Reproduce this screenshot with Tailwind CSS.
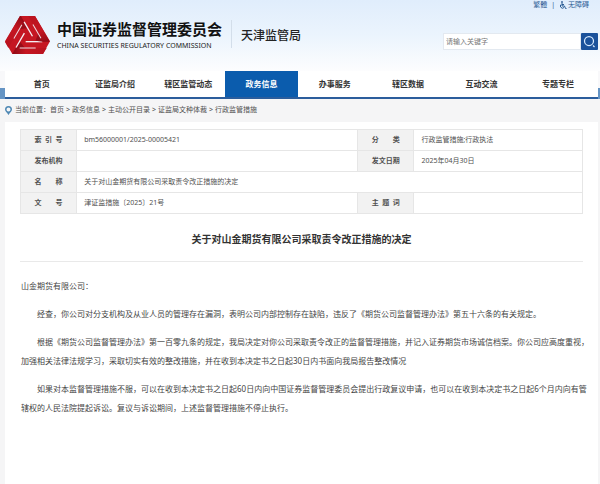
<!DOCTYPE html>
<html lang="zh-CN">
<head>
    <meta charset="UTF-8">
    <meta name="viewport" content="width=device-width, initial-scale=1.0">
    <title>关于对山金期货有限公司采取责令改正措施的决定</title>
    <script src="https://cdn.jsdelivr.net/npm/@tailwindcss/browser@4"></script>
</head>
<body class="min-h-screen flex flex-col bg-[#f5f5f6] text-[#505050] text-[7px] font-['Noto_Sans','Noto_Sans_CJK_SC',sans-serif]">

    <!-- Header -->
    <header class="bg-linear-to-b from-[#e0edfc] via-[#ebf4fd] to-[#fdfdfe]">
        <div class="flex justify-between h-[71px] pl-[5px] pr-[2px]">
            <div class="flex items-start pt-[16px]">
                <svg class="w-[45px] h-[38px]" viewBox="0 0 135 114" aria-hidden="true">
                    <defs>
                        <linearGradient id="ribbon" x1="0" x2="1">
                            <stop offset="0" stop-color="#8c0a16"/>
                            <stop offset="0.4" stop-color="#c51622"/>
                            <stop offset="1" stop-color="#b8121e"/>
                        </linearGradient>
                        <g id="arm">
                            <path fill="url(#ribbon)" d="M22 114H114L125 96H33Z"/>
                            <path fill="#980d19" d="M22 114L33 95L46 78L60 96H38Z"/>
                            <path fill="none" stroke="#f4eff4" stroke-width="4" d="M62 77H112"/>
                            <path fill="none" stroke="#eedde3" stroke-width="3" d="M44 96H92"/>
                        </g>
                    </defs>
                    <path fill="#c51622" d="M45 0H90L135 76L114 114H22L0 76Z"/>
                    <use href="#arm"/>
                    <use href="#arm" transform="rotate(120 67.5 63)"/>
                    <use href="#arm" transform="rotate(240 67.5 63)"/>
                </svg>
                <div class="ml-[7px] pr-[9px] flex flex-col">
                    <strong class="text-[15px] leading-[26px] text-[#111]">中国证券监督管理委员会</strong>
                    <span class="text-[7px] leading-[8px] text-[#222]">CHINA SECURITIES REGULATORY COMMISSION</span>
                </div>
                <span class="border-l border-[#d3deea] mt-1 h-[28px] pl-[9px] pt-[4px] text-[12px] leading-[24px] font-medium text-[#222]">天津监管局</span>
            </div>
            <div class="flex flex-col items-end">
                <div class="flex items-center h-[10px] mr-[9px] text-[#2b5c94]">
                    <a href="#">繁體</a>
                    <span class="mx-[4px]">|</span>
                    <a href="#" class="flex items-center gap-px">
                        <svg class="w-[8px] h-[8px]" viewBox="0 0 16 16" fill="none" stroke="currentColor" stroke-width="2" aria-hidden="true">
                            <circle cx="6" cy="2" r="1" fill="currentColor"/>
                            <path d="M6 4V10H11L13 15H15M6 7H10M4 7A4 4 0 1 0 10 13"/>
                        </svg>
                        无障碍
                    </a>
                </div>
                <form class="flex mt-[23px]">
                    <input type="text" aria-label="搜索" placeholder="请输入关键字" class="w-[138px] h-[17px] px-[2px] bg-white border border-[#e3e9f0] placeholder:text-[#777]">
                    <button type="button" aria-label="搜索" class="w-[17px] h-[17px] flex items-center justify-center rounded-[1px] bg-[#1b529b]">
                        <svg class="w-[13px] h-[13px]" viewBox="0 0 26 26" fill="none" stroke="#d9ecff" stroke-width="2.5" aria-hidden="true">
                            <circle cx="12" cy="12" r="9"/>
                            <path d="M20 21L23 24"/>
                        </svg>
                    </button>
                </form>
            </div>
        </div>
    </header>

    <!-- Main navigation -->
    <div class="pl-[5px] pr-[2px] bg-linear-to-b from-[#f8f8fa] from-60% to-[#6594c4] to-60%">
        <nav class="grid grid-cols-[repeat(7,11fr)_12fr] h-[28px] bg-white border-b-2 border-[#2b5d9c] text-[8px] leading-[26px] font-bold text-center text-[#333]">
            <a href="#">首页</a>
            <a href="#">证监局介绍</a>
            <a href="#">辖区监管动态</a>
            <a href="#" class="bg-[#0b5cad] text-white">政务信息</a>
            <a href="#">办事服务</a>
            <a href="#">辖区数据</a>
            <a href="#">互动交流</a>
            <a href="#">专题专栏</a>
        </nav>
    </div>

    <!-- Breadcrumb -->
    <div class="flex items-center h-[23px] pl-[5px]">
        <svg class="w-[7px] h-[9px] mr-[3px]" viewBox="0 0 14 18" aria-hidden="true">
            <path fill="#4f88b4" fill-rule="evenodd" d="M7 0A7 7 0 0 0 0 7C0 11 4 13 7 18C10 13 14 11 14 7A7 7 0 0 0 7 0ZM7 3A4 4 0 1 1 7 11A4 4 0 0 1 7 3Z"/>
        </svg>
        <span>当前位置：</span>
        <a href="#">首页</a><span class="mx-[2px]">&gt;</span>
        <a href="#">政务信息</a><span class="mx-[2px]">&gt;</span>
        <a href="#">主动公开目录</a><span class="mx-[2px]">&gt;</span>
        <a href="#">证监局文种体裁</a><span class="mx-[2px]">&gt;</span>
        <a href="#">行政监管措施</a>
    </div>

    <!-- Document -->
    <main class="grow ml-[5px] mr-[2px] pt-[7px] bg-white">
        <div class="px-[15px]">
            <table class="w-full table-fixed border-collapse leading-[20px] [&_td]:border [&_th]:border [&_td]:border-[#e6e6e6] [&_th]:border-[#e6e6e6] [&_td]:h-[21px] [&_td]:px-[7px] [&_td]:py-0 [&_th]:p-0 [&_th]:bg-[#f2f2f2]">
                <colgroup>
                    <col class="w-[10%]"><col class="w-[50%]"><col class="w-[10%]"><col class="w-[30%]">
                </colgroup>
                <tr>
                    <th scope="row"><div class="w-[28px] mx-auto [text-align-last:justify]">索 引 号</div></th>
                    <td>bm56000001/2025-00005421</td>
                    <th scope="row"><div class="w-[28px] mx-auto [text-align-last:justify]">分 类</div></th>
                    <td>行政监管措施;行政执法</td>
                </tr>
                <tr>
                    <th scope="row"><div class="w-[28px] mx-auto">发布机构</div></th>
                    <td></td>
                    <th scope="row"><div class="w-[28px] mx-auto">发文日期</div></th>
                    <td>2025年04月30日</td>
                </tr>
                <tr>
                    <th scope="row"><div class="w-[28px] mx-auto [text-align-last:justify]">名 称</div></th>
                    <td colspan="3">关于对山金期货有限公司采取责令改正措施的决定</td>
                </tr>
                <tr>
                    <th scope="row"><div class="w-[28px] mx-auto [text-align-last:justify]">文 号</div></th>
                    <td>津证监措施〔2025〕21号</td>
                    <th scope="row"><div class="w-[28px] mx-auto [text-align-last:justify]">主 题 词</div></th>
                    <td></td>
                </tr>
            </table>
            <h1 class="mt-[13px] pb-[10px] border-b border-[#e9e9e9] text-center text-[10px] leading-[24px] font-bold text-[#333]">关于对山金期货有限公司采取责令改正措施的决定</h1>
        </div>
        <article class="flex flex-col gap-[9px] pt-[14px] pl-[16px] pr-[7px] text-[8px] leading-[19px] text-[#444]">
            <p>山金期货有限公司：</p>
            <p class="indent-[16px]">经查，你公司对分支机构及从业人员的管理存在漏洞，表明公司内部控制存在缺陷，违反了《期货公司监督管理办法》第五十六条的有关规定。</p>
            <p class="indent-[16px]">根据《期货公司监督管理办法》第一百零九条的规定，我局决定对你公司采取责令改正的监督管理措施，并记入证券期货市场诚信档案。你公司应高度重视，加强相关法律法规学习，采取切实有效的整改措施，并在收到本决定书之日起30日内书面向我局报告整改情况</p>
            <p class="indent-[16px]">如果对本监督管理措施不服，可以在收到本决定书之日起60日内向中国证券监督管理委员会提出行政复议申请，也可以在收到本决定书之日起6个月内向有管辖权的人民法院提起诉讼。复议与诉讼期间，上述监督管理措施不停止执行。</p>
        </article>
    </main>
</body>
</html>
